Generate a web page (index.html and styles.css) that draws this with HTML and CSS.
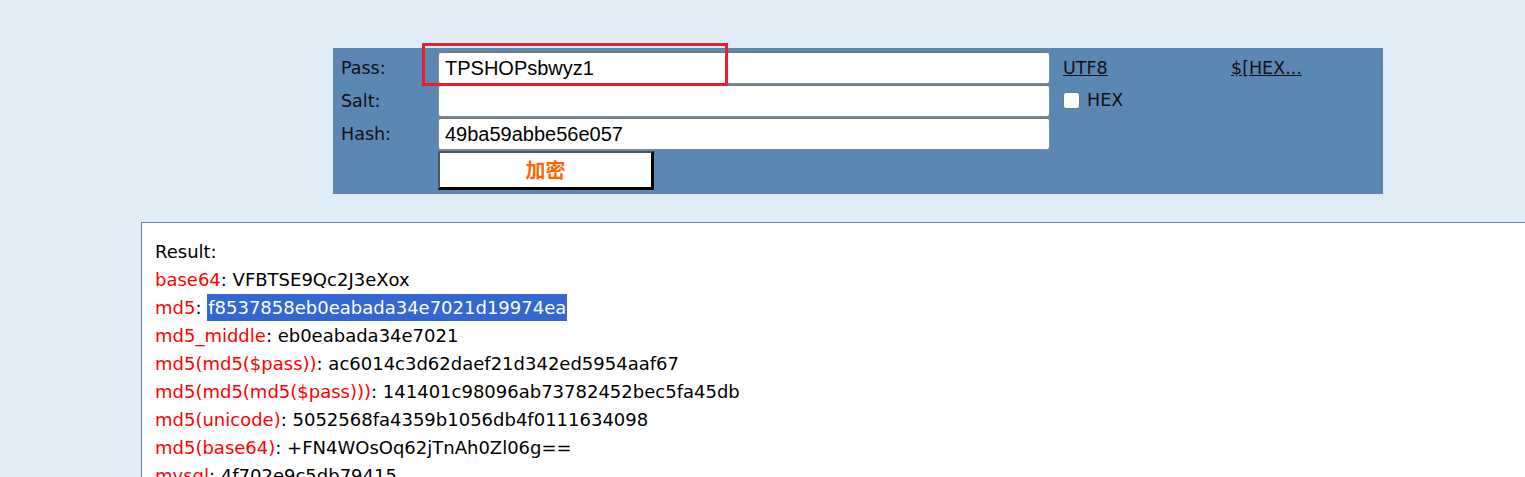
FILE: index.html
```html
<!DOCTYPE html>
<html>
<head>
<meta charset="utf-8">
<link rel="stylesheet" href="styles.css">
</head>
<body>
<div class="page">
  <form class="panel">
    <label class="lbl">Pass:</label>
    <input class="field" type="text" value="TPSHOPsbwyz1">
    <a class="link" href="#">UTF8</a>
    <a class="link" href="#">$[HEX...</a>

    <label class="lbl">Salt:</label>
    <input class="field" type="text" value="">
    <label class="chk"><span class="box"></span>HEX</label>
    <span></span>

    <label class="lbl">Hash:</label>
    <input class="field" type="text" value="49ba59abbe56e057">
    <span></span>
    <span></span>

    <span></span>
    <button class="btn" type="button">加密</button>
  </form>

  <div class="result">
    <div>Result:</div>
    <div><span class="k">base64</span>: VFBTSE9Qc2J3eXox</div>
    <div><span class="k">md5</span>: <span class="sel">f8537858eb0eabada34e7021d19974ea</span></div>
    <div><span class="k">md5_middle</span>: eb0eabada34e7021</div>
    <div><span class="k">md5(md5($pass))</span>: ac6014c3d62daef21d342ed5954aaf67</div>
    <div><span class="k">md5(md5(md5($pass)))</span>: 141401c98096ab73782452bec5fa45db</div>
    <div><span class="k">md5(unicode)</span>: 5052568fa4359b1056db4f0111634098</div>
    <div><span class="k">md5(base64)</span>: +FN4WOsOq62jTnAh0Zl06g==</div>
    <div><span class="k">mysql</span>: 4f702e9c5db79415</div>
  </div>

  <div class="mark"></div>
</div>
</body>
</html>
```

FILE: styles.css
```css
html, body {
  margin: 0;
  padding: 0;
  overflow: hidden;
}
body {
  background: #e1edf6;
  font-family: "DejaVu Sans", Verdana, sans-serif;
  font-size: 17.5px;
  color: #111;
  width: 1525px;
  height: 477px;
}
.page {
  position: relative;
  padding-top: 48px;
}
.panel {
  margin: 0 0 0 333px;
  width: 1050px;
  box-sizing: border-box;
  background: #5b87b3;
  padding: 4px 0 4px 8px;
  display: grid;
  grid-template-columns: 97px 612px 168px 1fr;
  grid-auto-rows: auto;
  row-gap: 1px;
  column-gap: 0;
  align-items: center;
}
.lbl {
  color: #111;
}
.field {
  box-sizing: border-box;
  height: 32px;
  width: 612px;
  margin: 0;
  border: 1px solid #8a8a8a;
  border-top-color: #767676;
  border-radius: 3px;
  background: #fff;
  padding: 0 6px;
  font-family: "Liberation Sans", Arial, sans-serif;
  font-size: 20px;
  color: #000;
  outline: none;
}
.link {
  color: #111;
  text-decoration: underline;
  padding-left: 13px;
  align-self: center;
}
.chk {
  display: flex;
  align-items: center;
  padding-left: 13px;
  color: #111;
  align-self: start;
  margin-top: 5px;
}
.box {
  width: 15px;
  height: 15px;
  border: 1px solid #767676;
  border-radius: 3px;
  background: #fff;
  margin-right: 7px;
}
.btn {
  width: 216px;
  height: 39px;
  box-sizing: border-box;
  margin: 0;
  background: #fff;
  border-style: solid;
  border-width: 2px 3px 3px 2px;
  border-color: #555 #000 #000 #555;
  color: #ff6600;
  font-family: "Noto Sans CJK SC", "DejaVu Sans", sans-serif;
  font-weight: bold;
  font-size: 20px;
  line-height: 1;
  padding: 0;
}
.result {
  margin: 28px 0 0 141px;
  width: 1420px;
  border: 1px solid #5b87b3;
  background: #fff;
  padding: 15px 13px;
  font-size: 18px;
  line-height: 28px;
  color: #000;
  height: 400px;
}
.k {
  color: #ff0000;
}
.sel {
  background: #3367d1;
  color: #fff;
  padding: 3px 1px;
}
.mark {
  position: absolute;
  left: 422px;
  top: 43px;
  width: 306px;
  height: 43px;
  box-sizing: border-box;
  border: 3px solid #e8202a;
}
```
